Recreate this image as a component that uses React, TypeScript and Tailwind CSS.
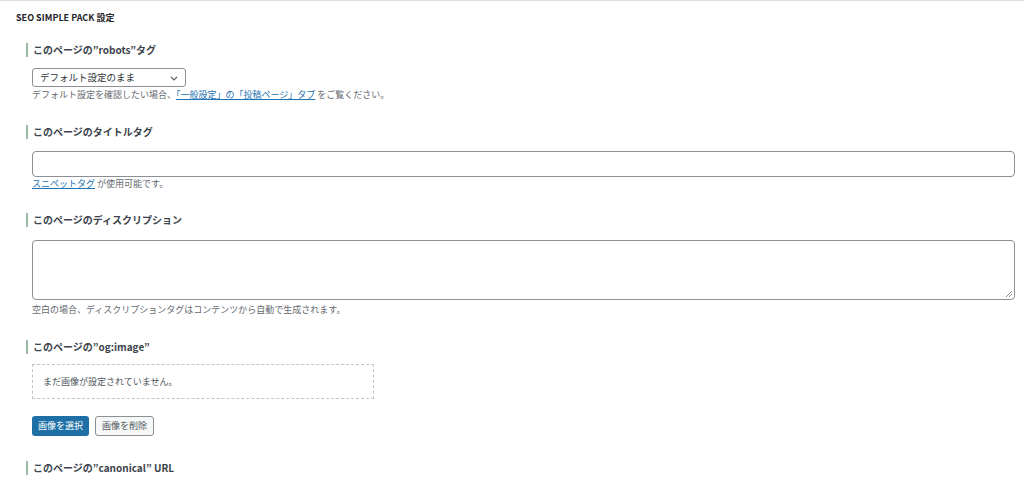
const font = "font-['Meiryo','Noto_Sans_CJK_JP',sans-serif]";

function Heading({ children }: { children: React.ReactNode }) {
  return (
    <h3 className="ml-[26px] border-l-2 border-[#9db8a2] pl-[5px] text-[10px] leading-[14px] font-bold text-[#3c434a]">
      {children}
    </h3>
  );
}

export default function App() {
  return (
    <div className={`${font} h-[480px] w-[1024px] overflow-hidden border-t border-[#dcdcde] bg-white text-[#3c434a]`}>
      <h2 className="pl-4 pt-[10px] text-[9px] leading-[14px] font-semibold text-[#1d2327]">SEO SIMPLE PACK 設定</h2>

      {/* robots */}
      <div className="mt-[18px]">
        <Heading>このページの”robots”タグ</Heading>
        <div className="ml-8 mt-[11px]">
          <div className="flex h-[19px] w-[154px] items-center justify-between rounded-[3px] border border-[#8c8f94] pl-[7px] pr-[5px] text-[9.5px] text-[#2c3338]">
            <span>デフォルト設定のまま</span>
            <svg width="12" height="12" viewBox="0 0 20 20" fill="none" stroke="#50575e" strokeWidth="2">
              <path d="M5 8l5 5 5-5" />
            </svg>
          </div>
          <p className="mt-[1px] text-[9px] leading-[13px] text-[#646970]">
            デフォルト設定を確認したい場合、
            <a className="text-[#2271b1] underline">「一般設定」の「投稿ページ」タブ</a> をご覧ください。
          </p>
        </div>
      </div>

      {/* title */}
      <div className="mt-[24px]">
        <Heading>このページのタイトルタグ</Heading>
        <div className="ml-8 mr-[9px] mt-[12px]">
          <div className="h-[26px] rounded-[4px] border border-[#8c8f94]" />
          <p className="text-[9px] leading-[13px] text-[#646970]">
            <a className="text-[#2271b1] underline">スニペットタグ</a> が使用可能です。
          </p>
        </div>
      </div>

      {/* description */}
      <div className="mt-[23px]">
        <Heading>このページのディスクリプション</Heading>
        <div className="ml-8 mr-[9px] mt-[13px]">
          <div className="relative h-[60px] rounded-[4px] border border-[#8c8f94]">
            <svg className="absolute bottom-[1px] right-[1px]" width="8" height="8" viewBox="0 0 8 8" stroke="#8c8f94" strokeWidth="1">
              <path d="M7 1L1 7M7 4L4 7" />
            </svg>
          </div>
          <p className="mt-[3px] text-[9px] leading-[13px] text-[#646970]">
            空白の場合、ディスクリプションタグはコンテンツから自動で生成されます。
          </p>
        </div>
      </div>

      {/* og:image */}
      <div className="mt-[24px]">
        <Heading>このページの”og:image”</Heading>
        <div className="ml-8 mt-[10px]">
          <div className="flex h-[35px] w-[342px] items-center border border-dashed border-[#c3c4c7] pl-[10px] text-[9px] text-[#50575e]">
            まだ画像が設定されていません。
          </div>
          <div className="mt-[17px] flex gap-[6px]">
            <button className="h-[20px] rounded-[3px] bg-[#1d6fa5] px-[6px] text-[9px] text-white">画像を選択</button>
            <button className="h-[20px] rounded-[3px] border border-[#8c8f94] bg-[#f6f7f7] px-[6px] text-[9px] text-[#50575e]">画像を削除</button>
          </div>
        </div>
      </div>

      {/* canonical */}
      <div className="mt-[25px]">
        <Heading>このページの”canonical” URL</Heading>
      </div>
    </div>
  );
}
